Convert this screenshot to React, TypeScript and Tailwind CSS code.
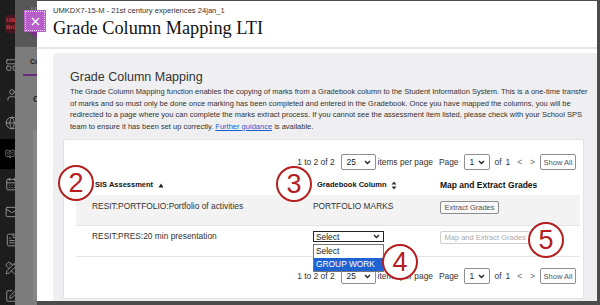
import { LayoutPanelTop, User, Globe, BookOpenText, CalendarDays, Mail, FileText, PencilRuler, SquarePen } from 'lucide-react';

function Chevron() {
    return (
        <svg width="7" height="5" viewBox="0 0 7 5" className="shrink-0">
            <path d="M1 1l2.5 2.5L6 1" fill="none" stroke="#222" strokeWidth="1.4" />
        </svg>
    );
}

function PageSelect({ value, width }: { value: string; width: string }) {
    return (
        <div className={`flex items-center justify-between h-[16px] ${width} border border-[#8f8f8f] rounded-[2px] bg-white pl-[5px] pr-[4px] text-[8.4px] text-[#222]`}>
            <span>{value}</span>
            <Chevron />
        </div>
    );
}

function Pagination() {
    return (
        <div className="flex items-center justify-end h-[16px] pr-[7px] text-[8.4px] text-[#333]">
            <span>1 to 2 of 2</span>
            <div className="ml-[6px]"><PageSelect value="25" width="w-[35px]" /></div>
            <span className="ml-[2px]">items per page</span>
            <span className="ml-[6px]">Page</span>
            <div className="ml-[5px]"><PageSelect value="1" width="w-[26px]" /></div>
            <span className="ml-[5px]">of</span>
            <span className="ml-[4px]">1</span>
            <span className="ml-[7px] text-[#666]">&lt;</span>
            <span className="ml-[8px] text-[#666]">&gt;</span>
            <button className="ml-[5px] h-[16px] w-[36px] border border-[#8f8f8f] rounded-[2px] bg-white text-[7.5px] text-[#555]">Show All</button>
        </div>
    );
}

function Marker({ n, className }: { n: string; className: string }) {
    return (
        <div className={`absolute flex items-center justify-center w-[36px] h-[36px] rounded-full border-[2.5px] border-[#b3201f] bg-white text-[27px] leading-none text-[#b3201f] ${className}`}>
            {n}
        </div>
    );
}

function Sidebar() {
    const icons = [
        { Icon: LayoutPanelTop, y: 'mt-[25px]' },
        { Icon: User, y: 'mt-[16px]' },
        { Icon: Globe, y: 'mt-[14px]' },
    ];
    return (
        <aside className="w-[15px] shrink-0 bg-[#1d1d1d] overflow-hidden flex flex-col">
            <div className="mt-[15px] ml-[5px] w-[16px] h-[18px] bg-[#4a161b] pl-[1px] pt-[2px] text-[6px] font-bold leading-[7px] text-[#e0313f]">
                <div>UW</div>
                <div>Bri</div>
            </div>
            {icons.map(({ Icon, y }, i) => (
                <div key={i} className={`${y} pl-[5px] text-[#9a9a9a]`}><Icon size={14} strokeWidth={1.5} /></div>
            ))}
            <div className="mt-[9px] h-[30px] bg-black flex items-center pl-[5px] text-[#9a9a9a]"><BookOpenText size={14} strokeWidth={1.5} /></div>
            <div className="mt-[8px] pl-[5px] text-[#9a9a9a]"><CalendarDays size={14} strokeWidth={1.5} /></div>
            <div className="mt-[14px] pl-[5px] text-[#9a9a9a]"><Mail size={14} strokeWidth={1.5} /></div>
            <div className="mt-[14px] pl-[5px] text-[#9a9a9a]"><FileText size={14} strokeWidth={1.5} /></div>
            <div className="mt-[14px] pl-[5px] text-[#9a9a9a]"><PencilRuler size={14} strokeWidth={1.5} /></div>
            <div className="mt-[14px] pl-[5px] text-[#9a9a9a]"><SquarePen size={14} strokeWidth={1.5} /></div>
        </aside>
    );
}

function Backdrop() {
    return (
        <div className="w-[22px] shrink-0 flex flex-col bg-[#7c7c7c]">
            <div className="h-[47px] bg-[#575757] pt-[5px] pl-[16px] text-[7px] text-[#aaa]">U</div>
            <div className="mt-[10px] pl-[15px] text-[7px] font-bold text-[#1e1e1e]">Co</div>
            <div className="mt-[6px] ml-[8px] h-[2px] bg-[#6d2a7d]" />
            <div className="mt-[17px] pl-[18px] text-[9px] font-bold text-[#1e1e1e]">C</div>
            <div className="mt-[24px] ml-[18px] h-[170px] bg-[#878787]" />
        </div>
    );
}

export default function App() {
    return (
        <div className="relative flex w-[600px] h-[305px] overflow-hidden bg-[#4b4b4b] font-['Liberation_Sans',Arial,sans-serif]">
            <Sidebar />
            <Backdrop />
            <main className="flex flex-col flex-1 mt-px mr-[3px] mb-[4px] bg-white">
                <header className="h-[48px] pl-[16px] pt-[5px] border-b-2 border-[#e6e6e6]">
                    <div className="text-[7.6px] leading-[10px] text-[#333]">UMKDX7-15-M - 21st century experiences 24jan_1</div>
                    <h1 className="mt-px text-[18.3px] leading-[22px] text-[#111] font-['Liberation_Serif','Times_New_Roman',serif]">Grade Column Mapping LTI</h1>
                </header>
                <section className="flex flex-col flex-1 mt-[4px] ml-[16px] rounded-tl-[4px] bg-[#efeff1] pt-[16px]">
                    <h2 className="pl-[17px] text-[12.5px] leading-[16px] text-[#333]">Grade Column Mapping</h2>
                    <p className="mt-px pl-[17px] whitespace-nowrap text-[7.5px] leading-[11.6px] text-[#333]">
                        The Grade Column Mapping function enables the copying of marks from a Gradebook column to the Student Information System. This is a one-time transfer<br />
                        of marks and so must only be done once marking has been completed and entered in the Gradebook. Once you have mapped the columns, you will be<br />
                        redirected to a page where you can complete the marks extract process. If you cannot see the assessment item listed, please check with your School SPS<br />
                        team to ensure it has been set up correctly. <span className="text-[#1a5fd0] underline">Further guidance</span> is available.
                    </p>
                    <div className="flex flex-col flex-1 mt-[7px] ml-[10px] mr-[13px] mb-[2px] bg-white border border-[#e2e2e2] rounded-[2px] pt-[14px]">
                        <Pagination />
                        <div className="mt-[3px] ml-[12px] mr-[3px] grid grid-cols-[221px_127px_1fr] text-[8.4px] leading-[10px] text-[#333]">
                            <div className="h-[22px] flex items-center pt-[2px] pl-[19px] text-[7.5px] font-bold text-[#111]">
                                <span>SIS Assessment</span>
                                <svg width="6" height="5" viewBox="0 0 6 5" className="ml-[5px]"><path d="M3 0.5L5.5 4.5H0.5z" fill="#222" /></svg>
                            </div>
                            <div className="h-[22px] flex items-center pt-[2px] pl-[20px] text-[7.5px] font-bold text-[#111]">
                                <span>Gradebook Column</span>
                                <svg width="6" height="9" viewBox="0 0 6 9" className="ml-[4px]"><path d="M3 0.5L5.5 3.6H0.5zM3 8.5L5.5 5.4H0.5z" fill="#333" /></svg>
                            </div>
                            <div className="h-[22px] flex items-center pt-[2px] pl-[16px] text-[8.5px] font-bold text-[#111]">Map and Extract Grades</div>

                            <div className="h-[31px] pt-[6px] pl-[16px] bg-[#f3f3f3] border-b border-[#e4e4e4]">RESIT:PORTFOLIO:Portfolio of activities</div>
                            <div className="h-[31px] pt-[6px] pl-[16px] bg-[#f3f3f3] border-b border-[#e4e4e4]">PORTFOLIO MARKS</div>
                            <div className="h-[31px] pt-[6px] pl-[16px] bg-[#f3f3f3] border-b border-[#e4e4e4]">
                                <button className="h-[13px] px-[3.5px] border border-[#8c8c8c] rounded-[2px] bg-[#f8f8f8] text-[7.5px] leading-none text-[#555]">Extract Grades</button>
                            </div>

                            <div className="h-[31px] pt-[5px] pl-[16px] border-b border-[#e4e4e4]">RESIT:PRES:20 min presentation</div>
                            <div className="h-[31px] pt-[5px] pl-[16px] border-b border-[#e4e4e4]">
                                <div className="flex items-center justify-between w-[71px] h-[11px] border border-[#222] bg-white pl-[2px] pr-[3px] leading-none text-[#222]">
                                    <span>Select</span>
                                    <Chevron />
                                </div>
                            </div>
                            <div className="h-[31px] pt-[5px] pl-[16px] border-b border-[#e4e4e4]">
                                <button className="h-[13px] px-[3.5px] border border-[#cfcfcf] rounded-[2px] bg-white text-[7.5px] leading-none text-[#aaa]">Map and Extract Grades</button>
                            </div>
                        </div>
                        <div className="mt-[11px]">
                            <Pagination />
                        </div>
                    </div>
                </section>
            </main>

            <button className="absolute left-[24px] top-[10px] w-[22px] h-[22px] flex items-center justify-center bg-[#b95fcc] outline outline-1 outline-dotted outline-white/70 -outline-offset-2 text-white">
                <svg width="9" height="9" viewBox="0 0 9 9"><path d="M1 1l7 7M8 1l-7 7" stroke="#fff" strokeWidth="1.3" /></svg>
            </button>
            <svg className="absolute left-[28px] top-[32px]" width="9" height="6" viewBox="0 0 9 6"><path d="M0 0H9V6z" fill="#7c2f8c" /></svg>

            <div className="absolute left-[313px] top-[244px] w-[71px] flex flex-col border border-[#767676] bg-white text-[8.4px]">
                <div className="h-[13px] flex items-center pl-[2px] text-[#222]">Select</div>
                <div className="h-[13px] flex items-center pl-[2px] bg-[#1f63d2] text-white">GROUP WORK</div>
            </div>

            <Marker n="2" className="left-[58px] top-[165px]" />
            <Marker n="3" className="left-[276px] top-[166px]" />
            <Marker n="4" className="left-[382px] top-[244px]" />
            <Marker n="5" className="left-[528px] top-[222px]" />
        </div>
    );
}
